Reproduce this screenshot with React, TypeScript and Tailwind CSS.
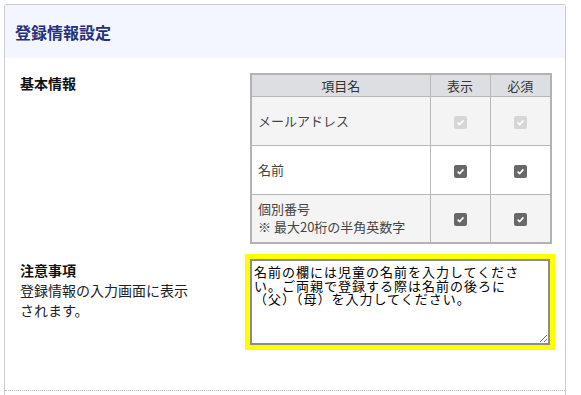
import React from 'react';

const jp = "font-['Noto_Sans_CJK_JP','Noto_Sans',sans-serif]";

function Check({ disabled }: { disabled?: boolean }) {
  return (
    <span
      className={
        'inline-flex items-center justify-center w-[13px] h-[13px] rounded-[2px] align-middle ' +
        (disabled ? 'bg-[#d6d6d6]' : 'bg-[#686868]')
      }
    >
      <svg width="9" height="9" viewBox="0 0 10 10">
        <path d="M1.8 5.2 L4 7.3 L8.3 2.6" fill="none" stroke="#fff" strokeWidth="1.8" />
      </svg>
    </span>
  );
}

export default function App() {
  return (
    <div className={`min-h-[395px] bg-white pt-[4px] pl-[4px] ${jp}`}>
      <div className="w-[562px] border border-[#cccccc] rounded-[3px] overflow-hidden">
        <div className="h-[53px] bg-[#f3f6fe] flex items-center pl-[10px] pt-[1px]">
          <h1 className="text-[16px] font-bold text-[#27307c]">登録情報設定</h1>
        </div>

        <div className="flex pt-[15px]">
          <div className="w-[245px] pl-[15px] text-[14px] font-bold text-[#111] leading-[20px]">
            基本情報
          </div>
          <table className="w-[300px] table-fixed border-collapse border-2 border-[#b3b3b3] text-[13px] text-[#444]">
            <colgroup>
              <col className="w-[179px]" />
              <col className="w-[60px]" />
              <col className="w-[61px]" />
            </colgroup>
            <thead>
              <tr className="h-[22px] bg-[#dcdee2] text-[#333]">
                <th className="border border-[#b8b8b8] font-normal text-center">項目名</th>
                <th className="border border-[#b8b8b8] font-normal text-center">表示</th>
                <th className="border border-[#b8b8b8] font-normal text-center">必須</th>
              </tr>
            </thead>
            <tbody>
              <tr className="h-[49px] bg-[#f4f4f4]">
                <td className="border border-[#b8b8b8] pl-[6px]">メールアドレス</td>
                <td className="border border-[#b8b8b8] text-center"><Check disabled /></td>
                <td className="border border-[#b8b8b8] text-center"><Check disabled /></td>
              </tr>
              <tr className="h-[49px] bg-white">
                <td className="border border-[#b8b8b8] pl-[6px]">名前</td>
                <td className="border border-[#b8b8b8] text-center"><Check /></td>
                <td className="border border-[#b8b8b8] text-center"><Check /></td>
              </tr>
              <tr className="h-[49px] bg-[#f4f4f4]">
                <td className="border border-[#b8b8b8] pl-[6px] leading-[18px]">
                  個別番号
                  <br />※ 最大20桁の半角英数字
                </td>
                <td className="border border-[#b8b8b8] text-center"><Check /></td>
                <td className="border border-[#b8b8b8] text-center"><Check /></td>
              </tr>
            </tbody>
          </table>
        </div>

        <div className="flex pt-[10px] pb-[40px] border-b border-dotted border-[#bbbbbb]">
          <div className="w-[240px] pl-[15px] pt-[6px] text-[14px] leading-[20px] text-[#222]">
            <div className="font-bold text-[#111]">注意事項</div>
            <div className="w-[180px]">登録情報の入力画面に表示されます。</div>
          </div>
          <div className="border-[5px] border-[#ffff00] flex">
            <textarea
              className="w-[300px] h-[86px] border-2 border-[#8c8c8c] bg-white text-black text-[13px] tracking-[1px] leading-[13.5px] pt-[4px] pl-[2px] pr-[20px] outline-none font-['Noto_Sans_CJK_JP',monospace]"
              defaultValue="名前の欄には児童の名前を入力してください。ご両親で登録する際は名前の後ろに（父）（母）を入力してください。"
            />
          </div>
        </div>
        <div className="h-[20px]" />
      </div>
    </div>
  );
}
